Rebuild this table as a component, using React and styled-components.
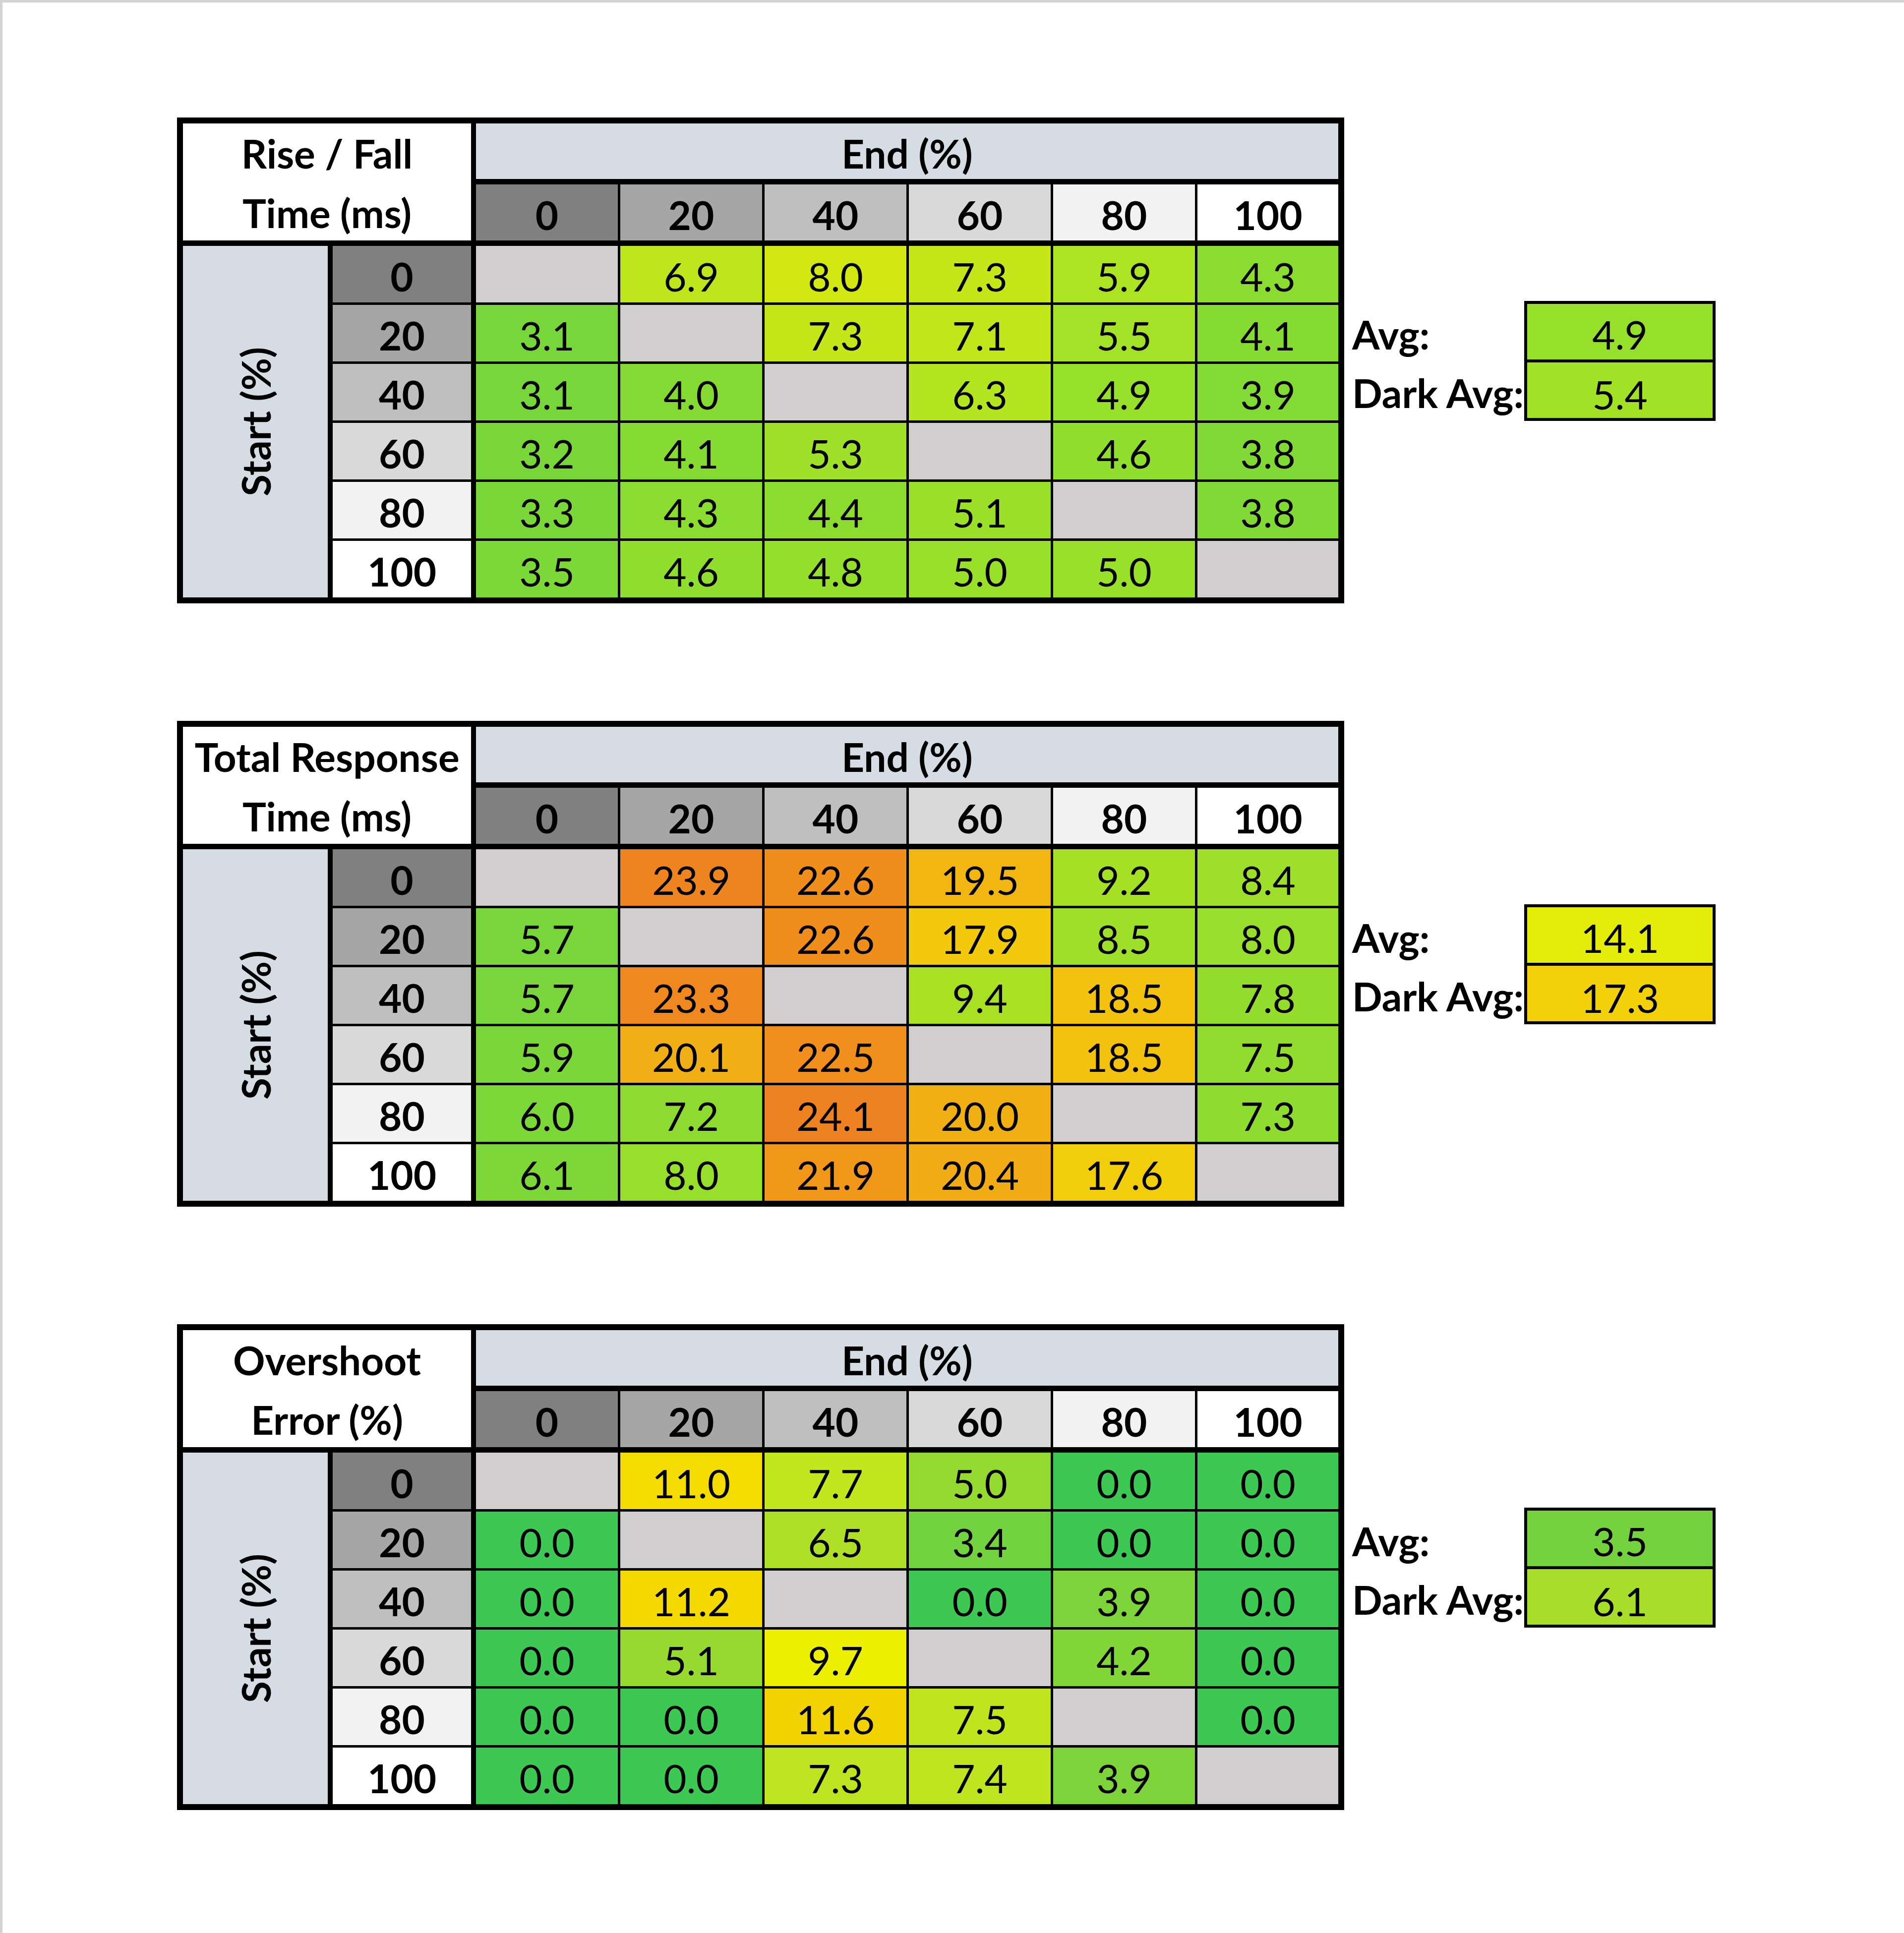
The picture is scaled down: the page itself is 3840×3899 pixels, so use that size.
import React from 'react';
import styled, { createGlobalStyle } from 'styled-components';

const GlobalStyle = createGlobalStyle`
  html, body { margin: 0; padding: 0; background: #fff; }
  body { font-family: Lato, "Open Sans", sans-serif; color: #000; }
`;

const FONT = 80;

const Page = styled.div`
  box-sizing: border-box;
  width: 3840px;
  height: 3899px;
  border-top: 5px solid #d4d4d4;
  border-left: 5px solid #d4d4d4;
  background: #fff;
  padding: 232px 0 0 352px;
  display: flex;
  flex-direction: column;
  gap: 237px;
  font-family: Lato, "Open Sans", sans-serif;
`;

const Section = styled.section`
  display: flex;
  align-items: flex-start;
`;

const Grid = styled.div`
  flex: none;
  display: grid;
  grid-template-columns: 302px 289px repeat(5, 291px) 284px;
  grid-template-rows: 123px 124px repeat(5, 119px) 114px;
  border: 12px solid #000;
  background: #fff;
`;

const BaseCell = styled.div`
  box-sizing: border-box;
  display: flex;
  align-items: center;
  justify-content: center;
  padding-top: 8px;
  font-size: ${FONT}px;
  line-height: 1;
  white-space: nowrap;
`;

const Corner = styled(BaseCell)`
  grid-column: span 2;
  grid-row: span 2;
  flex-direction: column;
  padding-top: 4px;
  background: #fff;
  font-weight: 700;
  border-right: 10px solid #000;
  border-bottom: 11px solid #000;
`;

const CornerLine = styled.span`
  display: block;
  height: 120px;
  line-height: 120px;
`;

const EndHeader = styled(BaseCell)`
  grid-column: span 6;
  background: #d6dce4;
  font-weight: 700;
  border-bottom: 11px solid #000;
`;

const ColHeader = styled(BaseCell)`
  background: ${p => p.$bg};
  font-weight: 700;
  border-right: ${p => (p.$last ? 0 : 5)}px solid #000;
  border-bottom: 11px solid #000;
`;

const StartCell = styled(BaseCell)`
  grid-row: span 6;
  padding-top: 0;
  background: #d6dce4;
  border-right: 10px solid #000;
`;

const VerticalText = styled.span`
  writing-mode: vertical-rl;
  transform: rotate(180deg);
  font-weight: 700;
`;

const RowHeader = styled(BaseCell)`
  background: ${p => p.$bg};
  font-weight: 700;
  border-right: 10px solid #000;
  border-bottom: ${p => (p.$last ? 0 : 5)}px solid #000;
`;

const DataCell = styled(BaseCell)`
  background: ${p => p.$bg};
  font-weight: 400;
  border-right: ${p => (p.$lastCol ? 0 : 5)}px solid #000;
  border-bottom: ${p => (p.$lastRow ? 0 : 5)}px solid #000;
`;

const Side = styled.div`
  flex: none;
  display: flex;
  margin-top: 370px;
  margin-left: 16px;
`;

const Labels = styled.div`
  display: flex;
  flex-direction: column;
  gap: 6px;
  padding-top: 6px;
  width: 347px;
`;

const Label = styled.div`
  height: 112px;
  display: flex;
  align-items: center;
  padding-top: 10px;
  box-sizing: border-box;
  font-size: ${FONT}px;
  font-weight: 700;
  line-height: 1;
  white-space: nowrap;
`;

const AvgBox = styled.div`
  width: 386px;
  box-sizing: border-box;
  border: 6px solid #000;
  display: flex;
  flex-direction: column;
`;

const AvgValue = styled(BaseCell)`
  height: ${p => (p.$second ? 118 : 112)}px;
  background: ${p => p.$bg};
  border-top: ${p => (p.$second ? 6 : 0)}px solid #000;
  padding-top: ${p => (p.$second ? 16 : 10)}px;
`;

const SHADES = ['#808080', '#a6a6a6', '#bfbfbf', '#d9d9d9', '#f2f2f2', '#ffffff'];
const LEVELS = [0, 20, 40, 60, 80, 100];
const EMPTY = '#d0cece';

const toRgb = h => [1, 3, 5].map(i => parseInt(h.slice(i, i + 2), 16));
const toHex = c => '#' + c.map(v => Math.round(v).toString(16).padStart(2, '0')).join('');

function colorFor(stops, v) {
  if (v <= stops[0][0]) return stops[0][1];
  for (let i = 1; i < stops.length; i++) {
    const [v1, c1] = stops[i];
    const [v0, c0] = stops[i - 1];
    if (v <= v1) {
      const t = (v - v0) / (v1 - v0);
      const a = toRgb(c0);
      const b = toRgb(c1);
      return toHex(a.map((x, k) => x + (b[k] - x) * t));
    }
  }
  return stops[stops.length - 1][1];
}

const TABLES = [
  {
    title: ['Rise / Fall', 'Time (ms)'],
    stops: [
      [3.1, '#76d63a'],
      [4.0, '#84da33'],
      [5.0, '#98e02a'],
      [6.0, '#aee422'],
      [7.0, '#bfe61b'],
      [8.0, '#d3e813'],
    ],
    rows: [
      [null, 6.9, 8.0, 7.3, 5.9, 4.3],
      [3.1, null, 7.3, 7.1, 5.5, 4.1],
      [3.1, 4.0, null, 6.3, 4.9, 3.9],
      [3.2, 4.1, 5.3, null, 4.6, 3.8],
      [3.3, 4.3, 4.4, 5.1, null, 3.8],
      [3.5, 4.6, 4.8, 5.0, 5.0, null],
    ],
    avg: 4.9,
    dark: 5.4,
  },
  {
    title: ['Total Response', 'Time (ms)'],
    stops: [
      [5.7, '#78d63a'],
      [8.0, '#98de2c'],
      [9.4, '#a8e024'],
      [14.1, '#e4ec0a'],
      [17.3, '#f2d00a'],
      [18.5, '#f2c20e'],
      [20.0, '#f0b014'],
      [22.6, '#f08e1c'],
      [24.1, '#ee8220'],
    ],
    rows: [
      [null, 23.9, 22.6, 19.5, 9.2, 8.4],
      [5.7, null, 22.6, 17.9, 8.5, 8.0],
      [5.7, 23.3, null, 9.4, 18.5, 7.8],
      [5.9, 20.1, 22.5, null, 18.5, 7.5],
      [6.0, 7.2, 24.1, 20.0, null, 7.3],
      [6.1, 8.0, 21.9, 20.4, 17.6, null],
    ],
    avg: 14.1,
    dark: 17.3,
  },
  {
    title: ['Overshoot', 'Error (%)'],
    stops: [
      [0, '#3cc852'],
      [3.5, '#74d23e'],
      [5.0, '#94da30'],
      [6.1, '#a6de2a'],
      [7.7, '#c4e61c'],
      [9.7, '#ecf000'],
      [11.0, '#f4dc00'],
      [11.6, '#f2d200'],
    ],
    rows: [
      [null, 11.0, 7.7, 5.0, 0.0, 0.0],
      [0.0, null, 6.5, 3.4, 0.0, 0.0],
      [0.0, 11.2, null, 0.0, 3.9, 0.0],
      [0.0, 5.1, 9.7, null, 4.2, 0.0],
      [0.0, 0.0, 11.6, 7.5, null, 0.0],
      [0.0, 0.0, 7.3, 7.4, 3.9, null],
    ],
    avg: 3.5,
    dark: 6.1,
  },
];

function ResponseTable({ table }) {
  const cells = [];
  cells.push(
    <Corner key="corner">
      <CornerLine>{table.title[0]}</CornerLine>
      <CornerLine>{table.title[1]}</CornerLine>
    </Corner>
  );
  cells.push(<EndHeader key="end">End (%)</EndHeader>);
  LEVELS.forEach((lv, i) => {
    cells.push(
      <ColHeader key={'c' + lv} $bg={SHADES[i]} $last={i === 5}>
        {lv}
      </ColHeader>
    );
  });
  cells.push(
    <StartCell key="start">
      <VerticalText>Start (%)</VerticalText>
    </StartCell>
  );
  table.rows.forEach((row, r) => {
    cells.push(
      <RowHeader key={'r' + r} $bg={SHADES[r]} $last={r === 5}>
        {LEVELS[r]}
      </RowHeader>
    );
    row.forEach((v, c) => {
      cells.push(
        <DataCell
          key={'d' + r + '-' + c}
          $bg={v === null ? EMPTY : colorFor(table.stops, v)}
          $lastCol={c === 5}
          $lastRow={r === 5}
        >
          {v === null ? '' : v.toFixed(1)}
        </DataCell>
      );
    });
  });

  return (
    <Section>
      <Grid>{cells}</Grid>
      <Side>
        <Labels>
          <Label>Avg:</Label>
          <Label>Dark Avg:</Label>
        </Labels>
        <AvgBox>
          <AvgValue $bg={colorFor(table.stops, table.avg)}>{table.avg.toFixed(1)}</AvgValue>
          <AvgValue $second $bg={colorFor(table.stops, table.dark)}>{table.dark.toFixed(1)}</AvgValue>
        </AvgBox>
      </Side>
    </Section>
  );
}

export default function App() {
  return (
    <>
      <GlobalStyle />
      <Page>
        {TABLES.map(t => (
          <ResponseTable key={t.title[0]} table={t} />
        ))}
      </Page>
    </>
  );
}
